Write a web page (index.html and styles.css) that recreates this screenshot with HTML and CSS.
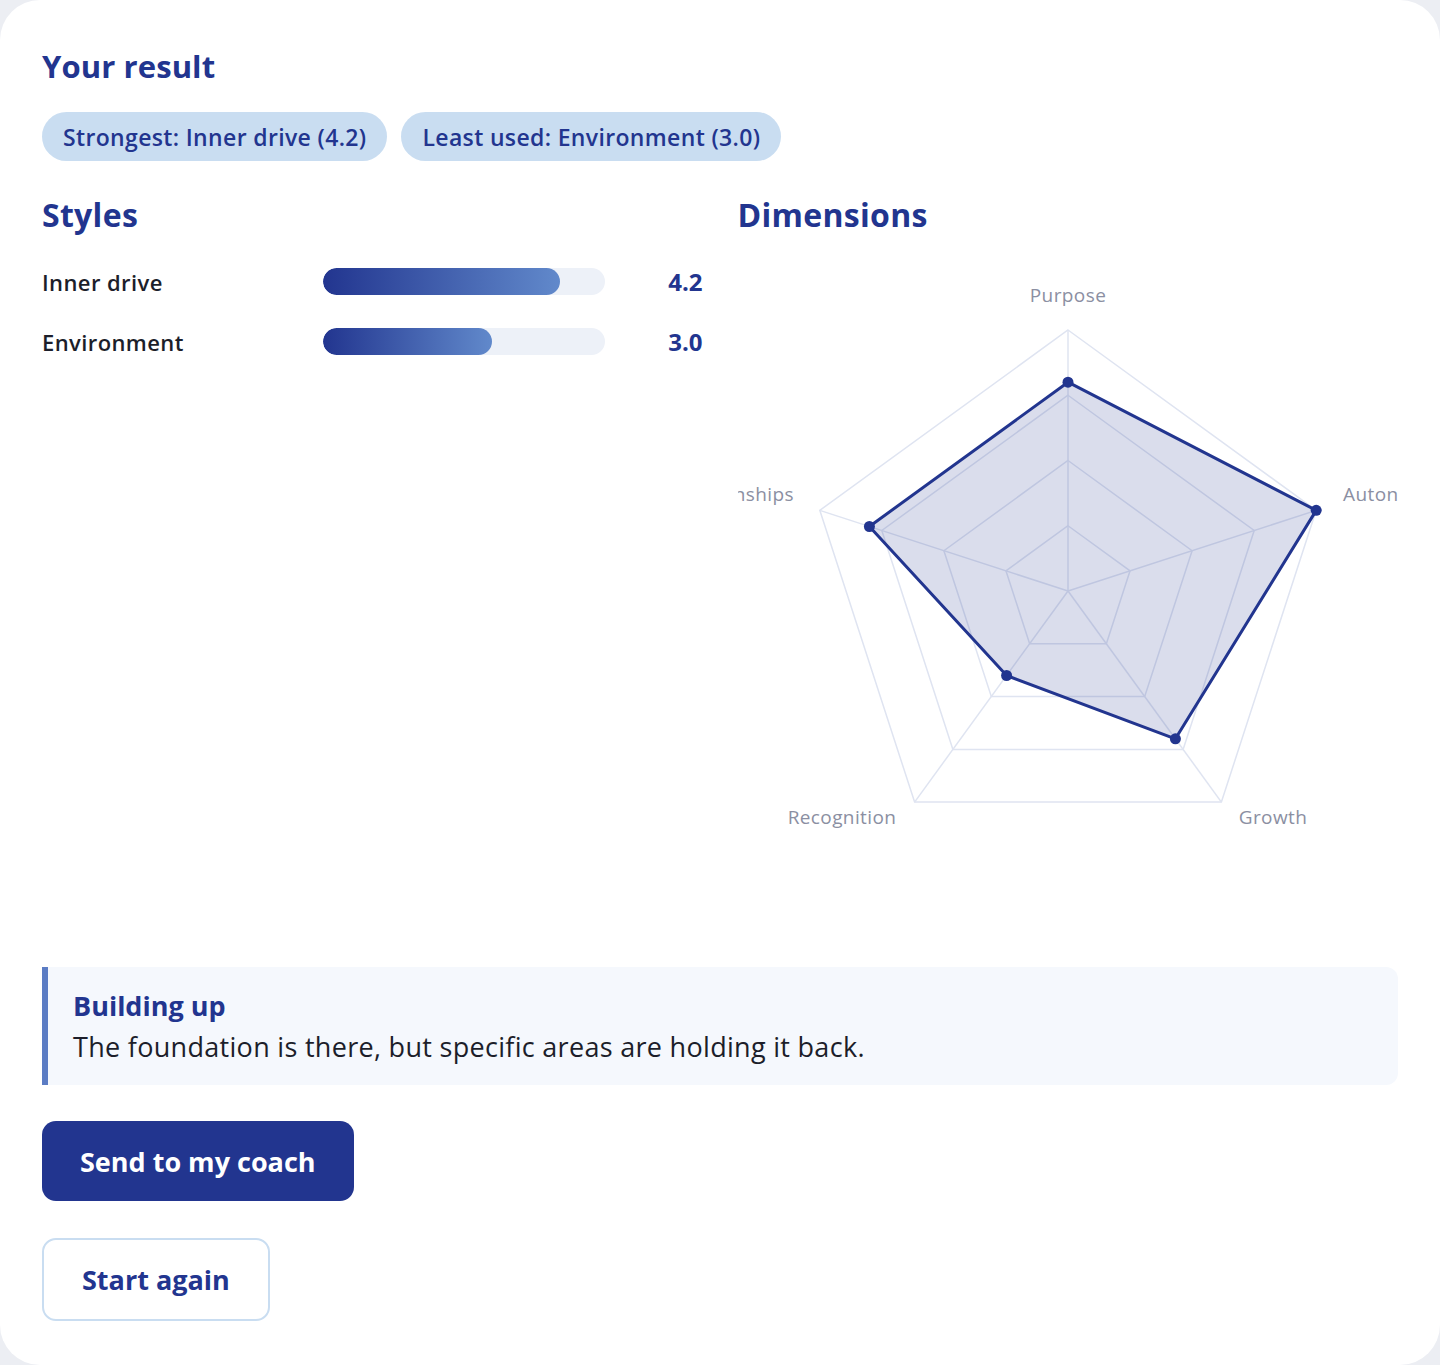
FILE: index.html
```html
<!DOCTYPE html>
<html lang="en">
<head>
    <meta charset="UTF-8">
    <meta name="viewport" content="width=device-width, initial-scale=1.0">
    <title>Your result</title>
    <link rel="stylesheet" href="styles.css">
</head>
<body>
    <div class="card">
        <h1 class="title">Your result</h1>

        <div class="pills">
            <span class="pill">Strongest: Inner drive (4.2)</span>
            <span class="pill">Least used: Environment (3.0)</span>
        </div>

        <div class="columns">
            <div class="styles">
                <h2 class="heading">Styles</h2>
                <div class="bar-row">
                    <div class="bar-label">Inner drive</div>
                    <div class="bar-track"><div class="bar-fill" style="width: 84%"></div></div>
                    <div class="bar-value">4.2</div>
                </div>
                <div class="bar-row">
                    <div class="bar-label">Environment</div>
                    <div class="bar-track"><div class="bar-fill" style="width: 60%"></div></div>
                    <div class="bar-value">3.0</div>
                </div>
            </div>

            <div class="dimensions">
                <h2 class="heading">Dimensions</h2>
                <svg class="radar" width="660" height="660" viewBox="0 0 660 660">
                    <!-- grid -->
                    <g class="grid">
                        <polygon points="330,69 578.2,249.35 483.4,541.1 176.6,541.1 81.8,249.35"/>
                        <polygon points="330,134.25 516.2,269.5 445.1,488.4 214.9,488.4 143.8,269.5"/>
                        <polygon points="330,199.5 454.1,289.7 406.7,435.6 253.3,435.6 205.9,289.7"/>
                        <polygon points="330,264.75 392.06,309.84 368.35,382.79 291.65,382.79 267.94,309.84"/>
                        <line x1="330" y1="330" x2="330" y2="69"/>
                        <line x1="330" y1="330" x2="578.2" y2="249.35"/>
                        <line x1="330" y1="330" x2="483.4" y2="541.1"/>
                        <line x1="330" y1="330" x2="176.6" y2="541.1"/>
                        <line x1="330" y1="330" x2="81.8" y2="249.35"/>
                    </g>
                    <!-- data -->
                    <polygon class="area" points="330,121.2 578.2,249.35 437.4,477.8 268.6,414.5 131.4,265.5"/>
                    <g class="dots">
                        <circle cx="330" cy="121.2" r="5.5"/>
                        <circle cx="578.2" cy="249.35" r="5.5"/>
                        <circle cx="437.4" cy="477.8" r="5.5"/>
                        <circle cx="268.6" cy="414.5" r="5.5"/>
                        <circle cx="131.4" cy="265.5" r="5.5"/>
                    </g>
                    <g class="labels">
                        <text x="330" y="41" text-anchor="middle">Purpose</text>
                        <text x="605" y="240" text-anchor="start">Autonomy</text>
                        <text x="535" y="563" text-anchor="middle">Growth</text>
                        <text x="104" y="563" text-anchor="middle">Recognition</text>
                        <text x="56" y="240" text-anchor="end">Relationships</text>
                    </g>
                </svg>
            </div>
        </div>

        <div class="callout">
            <div class="callout-title">Building up</div>
            <div class="callout-text">The foundation is there, but specific areas are holding it back.</div>
        </div>

        <div class="actions">
            <button class="btn btn-primary">Send to my coach</button>
            <button class="btn btn-outline">Start again</button>
        </div>
    </div>
</body>
</html>
```

FILE: styles.css
```css
body {
    margin: 0;
    background-color: #eceef3;
    font-family: "Open Sans", "DejaVu Sans", sans-serif;
    color: #1c1e2a;
}

.card {
    box-sizing: border-box;
    width: 1440px;
    min-height: 1365px;
    padding: 48px 42px 40px;
    background: #fff;
    border-radius: 40px;
}

.title {
    margin: 0;
    font-size: 31px;
    line-height: 36px;
    font-weight: 700;
    letter-spacing: 0.1px;
    color: #22358f;
}

.pills {
    display: flex;
    gap: 14px;
    margin-top: 28px;
}

.pill {
    display: flex;
    align-items: center;
    height: 49px;
    padding: 0 21px;
    border-radius: 25px;
    background: #c9ddf1;
    color: #22358f;
    font-size: 23px;
    font-weight: 600;
    letter-spacing: 0.35px;
}

.columns {
    display: grid;
    grid-template-columns: 1fr 1fr;
    gap: 35px;
    margin-top: 36px;
}

.heading {
    margin: 0;
    font-size: 32px;
    line-height: 36px;
    font-weight: 700;
    letter-spacing: 0.3px;
    color: #22358f;
}

.styles .heading {
    margin-bottom: 32px;
}

.bar-row {
    display: grid;
    grid-template-columns: 281px 282px 1fr;
    align-items: center;
    height: 30px;
    margin-bottom: 30px;
}

.bar-label {
    font-size: 22px;
    font-weight: 600;
    letter-spacing: 0.4px;
}

.bar-track {
    height: 27px;
    border-radius: 14px;
    background: #edf1f8;
    overflow: hidden;
}

.bar-fill {
    height: 100%;
    border-radius: 14px;
    background: linear-gradient(to right, #22358f, #6189cb);
}

.bar-value {
    text-align: right;
    font-size: 24px;
    font-weight: 700;
    color: #22358f;
}

.radar {
    display: block;
    margin-top: 28px;
}

.grid polygon,
.grid line {
    fill: none;
    stroke: #dfe4f1;
    stroke-width: 1.5;
}

.area {
    fill: rgba(34, 53, 143, 0.17);
    stroke: #22358f;
    stroke-width: 3;
    stroke-linejoin: round;
}

.dots circle {
    fill: #22358f;
}

.labels text {
    font-family: "Open Sans", "DejaVu Sans", sans-serif;
    font-size: 19px;
    letter-spacing: 0.4px;
    fill: #8b8fa2;
}

.callout {
    margin-top: 46px;
    padding: 22px 26px 20px 25px;
    background: #f5f8fd;
    border-left: 6px solid #5b7cc4;
    border-radius: 0 12px 12px 0;
}

.callout-title {
    font-size: 27px;
    line-height: 34px;
    font-weight: 700;
    color: #22358f;
}

.callout-text {
    margin-top: 6px;
    font-size: 27px;
    line-height: 36px;
    letter-spacing: 0.3px;
    color: #1c1e2a;
}

.actions {
    display: flex;
    flex-direction: column;
    align-items: flex-start;
    gap: 37px;
    margin-top: 36px;
}

.btn {
    font-family: inherit;
    font-size: 27px;
    font-weight: 700;
    padding: 0 38px;
    border-radius: 14px;
    cursor: pointer;
}

.btn-primary {
    height: 80px;
    border: none;
    background: #22358f;
    color: #fff;
}

.btn-outline {
    height: 83px;
    border: 2px solid #c9ddf1;
    background: #fff;
    color: #22358f;
}
```
